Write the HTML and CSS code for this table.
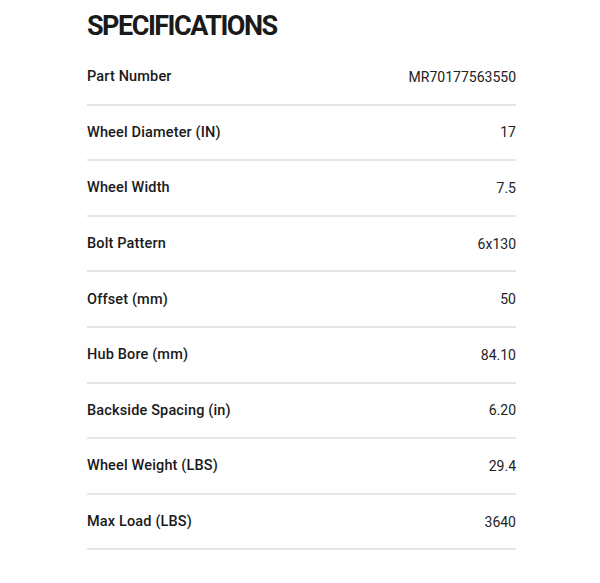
FILE: index.html
```html
<!DOCTYPE html>
<html lang="en">
<head>
<meta charset="utf-8">
<title>Specifications</title>
<link rel="stylesheet" href="styles.css">
</head>
<body>
<section class="specs">
  <h2 class="specs-title">SPECIFICATIONS</h2>
  <dl class="spec-list">
    <div class="spec-row"><dt>Part Number</dt><dd>MR70177563550</dd></div>
    <div class="spec-row"><dt>Wheel Diameter (IN)</dt><dd>17</dd></div>
    <div class="spec-row"><dt>Wheel Width</dt><dd>7.5</dd></div>
    <div class="spec-row"><dt>Bolt Pattern</dt><dd>6x130</dd></div>
    <div class="spec-row"><dt>Offset (mm)</dt><dd>50</dd></div>
    <div class="spec-row"><dt>Hub Bore (mm)</dt><dd>84.10</dd></div>
    <div class="spec-row"><dt>Backside Spacing (in)</dt><dd>6.20</dd></div>
    <div class="spec-row"><dt>Wheel Weight (LBS)</dt><dd>29.4</dd></div>
    <div class="spec-row"><dt>Max Load (LBS)</dt><dd>3640</dd></div>
  </dl>
</section>
</body>
</html>
```
FILE: styles.css
```css
html, body {
  margin: 0;
  padding: 0;
  background: #ffffff;
}
body {
  font-family: Roboto, "Liberation Sans", sans-serif;
  color: #1a1a1a;
}
.specs {
  width: 429px;
  margin-left: 87px;
  padding-top: 10px;
}
.specs-title {
  margin: 0;
  font-size: 27px;
  line-height: 32px;
  font-weight: 700;
  letter-spacing: -1.5px;
  color: #1a1a1a;
}
.spec-list {
  margin: 8px 0 0;
  padding: 0;
}
.spec-row {
  display: flex;
  justify-content: space-between;
  align-items: center;
  height: 53.6px;
  border-bottom: 2px solid #e6e6e6;
  font-size: 14px;
}
.spec-row dt {
  font-size: 14.5px;
  font-weight: 500;
  letter-spacing: 0.15px;
  color: #1a1a1a;
}
.spec-row dd {
  margin: 0;
  font-weight: 400;
  color: #222222;
}
```
